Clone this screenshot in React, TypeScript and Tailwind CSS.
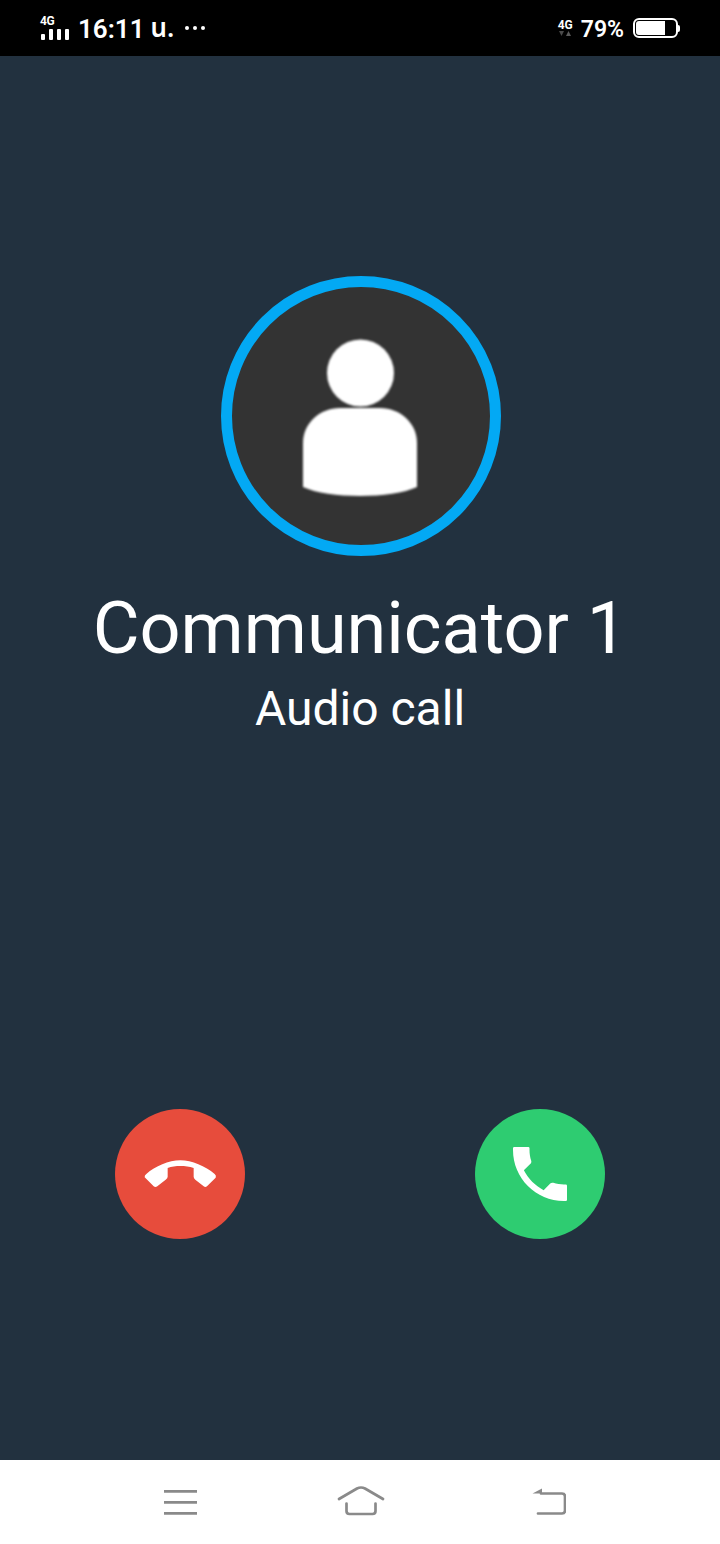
import React from 'react';

const PHONE =
  'M6.62 10.79c1.44 2.83 3.76 5.14 6.59 6.59l2.2-2.2c.27-.27.67-.36 1.02-.24 1.12.37 2.33.57 3.57.57h.6q.4 0 .4.4V20.6q0 .4-.4.4H20C10.61 21 3 13.39 3 4v-.6q0-.4.4-.4h4.7q.4 0 .4.4V4c0 1.25.2 2.45.57 3.57.11.35.03.74-.25 1.02l-2.2 2.2z';

const HANGUP =
  'M118 228Q117 222 123 218C150 195 190 177 225 177C260 177 300 195 328 218Q334 223 331 229L305 255Q300 259 295 255L270 235Q265 231 265 226L265 200C240 192 210 192 187 200L187 226Q187 231 181 235L156 255Q150 259 145 255Z';

function StatusBar() {
  return (
    <div className="h-[56px] shrink-0 bg-black flex items-center text-white [font-family:Roboto,sans-serif] pl-[40px] pr-[40px]">
      {/* left: signal + clock */}
      <div className="flex flex-col w-[30px] gap-[2px] mt-[-1px]">
        <span className="text-[12px] leading-[11px] font-bold tracking-[-0.3px]">4G</span>
        <div className="flex items-end gap-[4px] h-[11px] ml-[1px]">
          <span className="w-[4px] h-[6px] rounded-[1px] bg-white" />
          <span className="w-[4px] h-[11px] rounded-[1px] bg-white" />
          <span className="w-[4px] h-[11px] rounded-[1px] bg-white" />
          <span className="w-[4px] h-[11px] rounded-[1px] bg-white" />
        </div>
      </div>
      <span className="ml-[8px] mt-[2px] text-[26px] leading-none font-semibold">16:11</span>
      <span className="ml-[6px] mt-[2px] text-[26px] leading-none font-semibold [font-family:'Noto_Sans_Thai','Noto_Sans','DejaVu_Sans',sans-serif]">น.</span>
      <div className="ml-[11px] flex gap-[4px] mt-[-1px]">
        <span className="w-[4px] h-[4px] rounded-full bg-white" />
        <span className="w-[4px] h-[4px] rounded-full bg-white" />
        <span className="w-[4px] h-[4px] rounded-full bg-white" />
      </div>
      <div className="flex-1" />
      {/* right: network + battery */}
      <div className="flex flex-col items-center w-[17px] mt-[1px] gap-[1px]">
        <span className="text-[12px] leading-[10px] font-bold">4G</span>
        <svg width="14" height="6" viewBox="0 0 14 6">
          <path d="M1 0h5L3.5 5z" fill="#4a4a4a" />
          <path d="M10.5 0L13 5H8z" fill="#5a5a5a" />
        </svg>
      </div>
      <span className="ml-[7px] mt-[2px] text-[23px] leading-none font-semibold">79%</span>
      <div className="ml-[9px] flex items-center">
        <div className="w-[45px] h-[20px] rounded-[6px] border-2 border-white p-[1px]">
          <div className="w-[29px] h-full rounded-l-[3px] bg-white" />
        </div>
        <div className="w-[2px] h-[7px] bg-white rounded-r-[2px]" />
      </div>
    </div>
  );
}

function NavBar() {
  return (
    <div className="h-[84px] shrink-0 bg-white flex items-center pl-[164px]">
      <svg width="33" height="40" viewBox="0 0 33 40" fill="none" stroke="#8a8a8a" strokeWidth="2.7">
        <path d="M0 9.3h33M0 20.3h33M0 31.3h33" />
      </svg>
      <svg className="ml-[140px]" width="48" height="40" viewBox="0 0 48 40" fill="none" stroke="#8a8a8a" strokeWidth="2.7" strokeLinecap="round" strokeLinejoin="round">
        <path d="M2 17L20 6.5Q24 4.5 28 6.5L46 17" />
        <path d="M9.5 21.5v7.5q0 3 3 3h23q3 0 3-3v-7.5" />
      </svg>
      <svg className="ml-[147px]" width="34" height="40" viewBox="0 0 34 40" fill="none">
        <path d="M.5 11.5L10 6.5v5z" fill="#8a8a8a" />
        <path d="M9 11.5h21q3 0 3 3v14q0 3-3 3H6" stroke="#8a8a8a" strokeWidth="2.7" strokeLinecap="round" />
      </svg>
    </div>
  );
}

export default function App() {
  return (
    <div className="w-[720px] h-[1544px] flex flex-col bg-[#22313f] overflow-hidden [font-family:Roboto,sans-serif]">
      <StatusBar />

      <div className="flex-1 flex flex-col items-center">
        {/* Avatar */}
        <div className="mt-[220px] ml-[2px] w-[280px] h-[280px] rounded-full border-[11px] border-[#03a9f4] bg-[#333333] flex items-center justify-center">
          <svg className="blur-[1px] mt-[4px] ml-[-2px]" width="116" height="158" viewBox="0 0 116 158" fill="#fff">
            <circle cx="58.5" cy="34" r="33.5" />
            <path d="M1 148V104C1 84 18 69 38 69H78C98 69 115 84 115 104V148C90 160 26 160 1 148Z" />
          </svg>
        </div>

        <h1 className="mt-[31px] text-white text-[72px] leading-[84px] font-normal">Communicator 1</h1>
        <p className="mt-[10px] text-white text-[48px] leading-[56px]">Audio call</p>

        {/* Call actions */}
        <div className="mt-[372px] w-full grid grid-cols-2">
          <div className="flex justify-center">
            <button className="w-[130px] h-[130px] rounded-full bg-[#e74c3c] flex items-center justify-center">
              <svg width="76.67" height="31.67" viewBox="110 170 230 95" fill="#fff">
                <path d={HANGUP} />
              </svg>
            </button>
          </div>
          <div className="flex justify-center">
            <button className="w-[130px] h-[130px] rounded-full bg-[#2ecc71] flex items-center justify-center">
              <svg width="72" height="72" viewBox="0 0 24 24" fill="#fff">
                <path d={PHONE} />
              </svg>
            </button>
          </div>
        </div>
      </div>

      <NavBar />
    </div>
  );
}
